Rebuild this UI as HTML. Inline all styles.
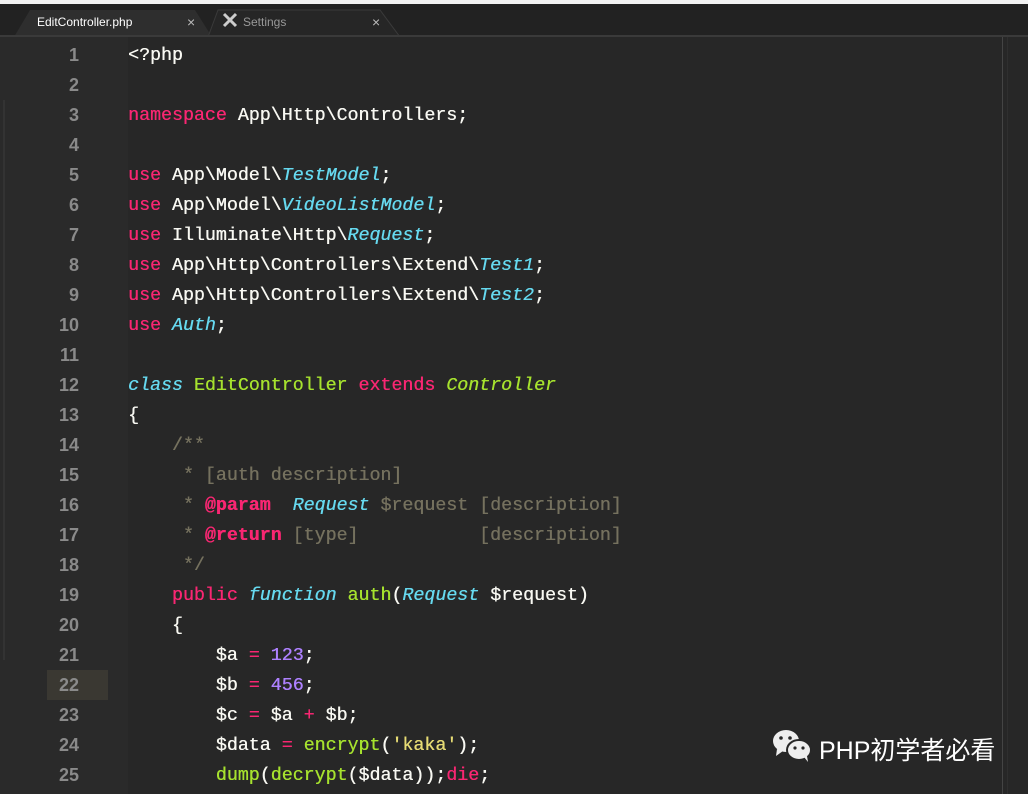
<!DOCTYPE html><html><head><meta charset="utf-8"><style>
body{margin:0;width:1028px;height:794px;overflow:hidden;background:#272727;position:relative;font-family:"Liberation Mono",monospace}
.top{position:absolute;left:0;top:0;width:1028px;height:4px;background:#f2f2f2}
.tabbar{position:absolute;left:0;top:4px;width:1028px;height:32px;background:#222}
.tabline{position:absolute;left:0;top:35px;width:1028px;height:2px;background:#3a3a3a}
.tab{position:absolute;top:9px;height:27px;font:12px "Liberation Sans",sans-serif;line-height:27px}
.gut{position:absolute;left:0;top:37px;width:128px;height:757px;background:#2a2a2a}
.edge{position:absolute;left:3px;top:100px;width:2px;height:560px;background:#333}
.hl{position:absolute;left:47px;top:670px;width:61px;height:30px;background:#3a3832}
.nums{position:absolute;left:0;top:40px;width:79px;text-align:right;color:#8a8a8a;font-size:18px;line-height:30px;font-weight:bold;font-family:"Liberation Sans",sans-serif;white-space:pre}
pre{position:absolute;left:128px;top:41px;margin:0;font-size:18.3px;line-height:30px;color:#f8f8f2;font-family:"Liberation Mono",monospace;text-shadow:0.35px 0 0 currentColor}
.k{color:#f92672}.c{color:#66d9ef;font-style:italic}.g{color:#a6e22e}.n{color:#ae81ff}.s{color:#e6db74}.m{color:#75715e}.b{font-weight:bold}
.r1{position:absolute;left:1002px;top:37px;width:1px;height:757px;background:#444}
.r2{position:absolute;left:1007px;top:37px;width:1px;height:757px;background:#2f2f2f}
.wm{position:absolute;left:819px;top:731px;color:#fff;font:25px "Liberation Sans","Noto Sans CJK SC",sans-serif}
</style></head><body>
<div class="top"></div><div class="tabbar"></div>
<svg style="position:absolute;left:0;top:4px" width="420" height="33"><path d="M14 33 L30 6 L195 6 L212 33Z" fill="#2e2e2e"/><path d="M208 33 L218 6 L380 6 L400 33Z" fill="#262626" stroke="#3a3a3a"/><path d="M224 10 L236 22 M236 10 L224 22" stroke="#ccc" stroke-width="3"/></svg>
<div class="tab" style="left:37px;color:#fff">EditController.php</div>
<div class="tab" style="left:187px;color:#bbb;font-size:14px">×</div>
<div class="tab" style="left:243px;color:#999">Settings</div>
<div class="tab" style="left:372px;color:#bbb;font-size:14px">×</div>
<div class="tabline"></div>
<div class="gut"></div><div class="edge"></div><div class="hl"></div>
<div class="r1"></div><div class="r2"></div>
<div class="nums">1
2
3
4
5
6
7
8
9
10
11
12
13
14
15
16
17
18
19
20
21
22
23
24
25</div>
<pre>&lt;?php

<span class="k">namespace</span> App\Http\Controllers;

<span class="k">use</span> App\Model\<span class="c">TestModel</span>;
<span class="k">use</span> App\Model\<span class="c">VideoListModel</span>;
<span class="k">use</span> Illuminate\Http\<span class="c">Request</span>;
<span class="k">use</span> App\Http\Controllers\Extend\<span class="c">Test1</span>;
<span class="k">use</span> App\Http\Controllers\Extend\<span class="c">Test2</span>;
<span class="k">use</span> <span class="c">Auth</span>;

<span class="c">class</span> <span class="g">EditController</span> <span class="k">extends</span> <span class="g" style="font-style:italic">Controller</span>
{
    <span class="m">/**</span>
<span class="m">     * [auth description]</span>
<span class="m">     * </span><span class="k b">@param</span>  <span class="c">Request</span> <span class="m">$request [description]</span>
<span class="m">     * </span><span class="k b">@return</span> <span class="m">[type]           [description]</span>
<span class="m">     */</span>
    <span class="k">public</span> <span class="c">function</span> <span class="g">auth</span>(<span class="c">Request</span> $request)
    {
        $a <span class="k">=</span> <span class="n">123</span>;
        $b <span class="k">=</span> <span class="n">456</span>;
        $c <span class="k">=</span> $a <span class="k">+</span> $b;
        $data <span class="k">=</span> <span class="g">encrypt</span>(<span class="s">'kaka'</span>);
        <span class="g">dump</span>(<span class="g">decrypt</span>($data));<span class="k">die</span>;</pre>
<svg style="position:absolute;left:771px;top:727px" width="44" height="38"><ellipse cx="15" cy="14" rx="13" ry="11" fill="#eee"/><path d="M6 22 L5 29 L12 24Z" fill="#eee"/><ellipse cx="28" cy="23" rx="12" ry="10" fill="#eee" stroke="#272727" stroke-width="2"/><path d="M33 30 L37 35 L36 29Z" fill="#eee"/><circle cx="10" cy="11" r="1.8" fill="#272727"/><circle cx="19" cy="11" r="1.8" fill="#272727"/><circle cx="24" cy="21" r="1.6" fill="#272727"/><circle cx="32" cy="21" r="1.6" fill="#272727"/></svg>
<div class="wm">PHP初学者必看</div>
</body></html>
